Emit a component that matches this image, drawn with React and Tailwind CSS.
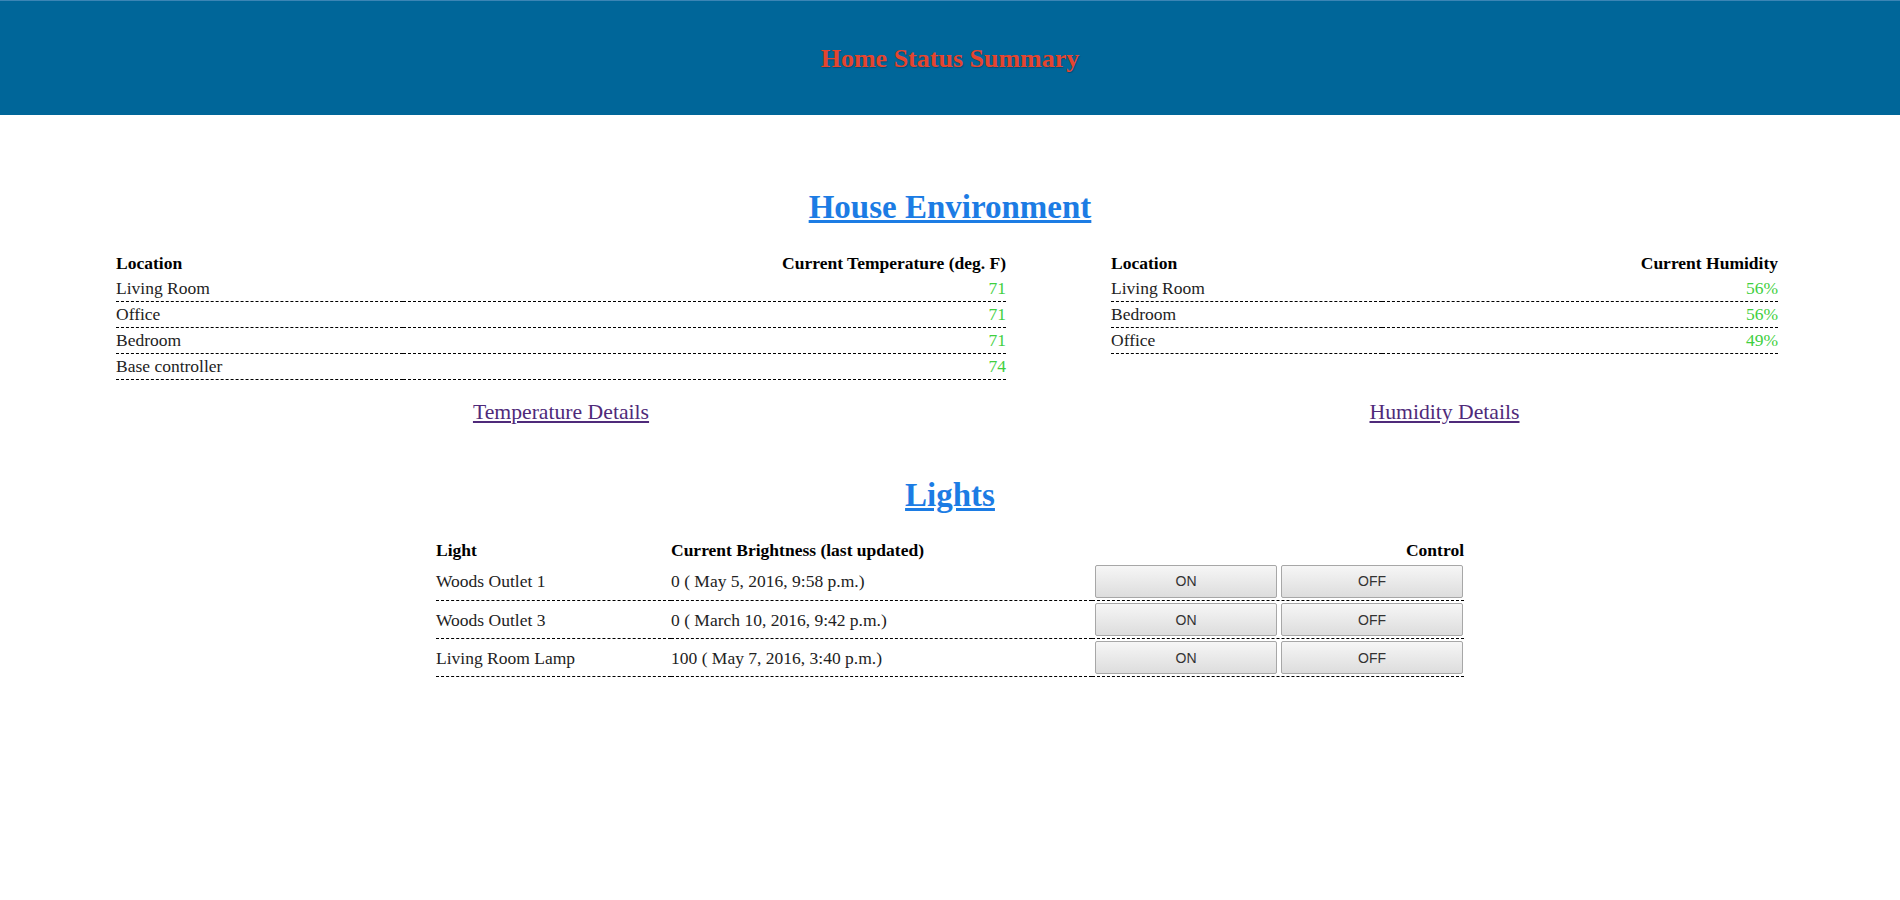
import React from 'react';

const temps = [
  { place: 'Living Room', value: '71' },
  { place: 'Office', value: '71' },
  { place: 'Bedroom', value: '71' },
  { place: 'Base controller', value: '74' },
];

const humidity = [
  { place: 'Living Room', value: '56%' },
  { place: 'Bedroom', value: '56%' },
  { place: 'Office', value: '49%' },
];

const lights = [
  { name: 'Woods Outlet 1', brightness: '0 ( May 5, 2016, 9:58 p.m.)' },
  { name: 'Woods Outlet 3', brightness: '0 ( March 10, 2016, 9:42 p.m.)' },
  { name: 'Living Room Lamp', brightness: '100 ( May 7, 2016, 3:40 p.m.)' },
];

const SensorTable = ({ label, rows }) => (
  <table className="w-full border-collapse text-[17.5px] leading-[20px]">
    <thead>
      <tr className="h-[25px]">
        <th className="text-left font-bold text-black p-0">Location</th>
        <th className="text-right font-bold text-black p-0">{label}</th>
      </tr>
    </thead>
    <tbody>
      {rows.map((row) => (
        <tr key={row.place} className="h-[26px] border-b border-dashed border-black">
          <td className="p-0 text-[#222]">{row.place}</td>
          <td className="p-0 text-right text-[#3fcf3f]">{row.value}</td>
        </tr>
      ))}
    </tbody>
  </table>
);

const Btn = ({ children }) => (
  <button className="w-[182px] h-[33px] rounded-[2px] border border-[#a7a7a7] bg-gradient-to-b from-[#f6f6f6] to-[#dddddd] font-['Liberation_Sans',Arial,sans-serif] text-[14px] text-[#333]">
    {children}
  </button>
);

const App = () => {
  return (
    <div className="min-h-screen bg-white font-['Liberation_Serif','Times_New_Roman',serif]">
      {/* Header */}
      <header className="h-[115px] bg-[#006699] border-t border-[#3b85b5] flex items-center justify-center">
        <h1 className="text-[26px] font-bold text-[#e5452f] [text-shadow:1px_1px_1px_rgba(0,0,0,0.25)]">
          Home Status Summary
        </h1>
      </header>

      {/* House Environment */}
      <section className="pt-[74px]">
        <h2 className="text-center text-[33px] leading-[37px] font-bold">
          <a href="#" className="text-[#1c7ce4] underline">House Environment</a>
        </h2>

        <div className="mt-[24px] pl-[116px] grid grid-cols-[890px_667px] gap-x-[105px]">
          <div>
            <SensorTable label="Current Temperature (deg. F)" rows={temps} />
          </div>
          <div>
            <SensorTable label="Current Humidity" rows={humidity} />
          </div>
          <div className="mt-[20px] text-center text-[21.7px] leading-[24px]">
            <a href="#" className="text-[#4f2a7a] underline">Temperature Details</a>
          </div>
          <div className="mt-[20px] text-center text-[21.7px] leading-[24px]">
            <a href="#" className="text-[#4f2a7a] underline">Humidity Details</a>
          </div>
        </div>
      </section>

      {/* Lights */}
      <section className="pt-[53px]">
        <h2 className="text-center text-[33px] leading-[37px] font-bold">
          <a href="#" className="text-[#1c7ce4] underline">Lights</a>
        </h2>

        <div className="mt-[24px] flex justify-center">
          <table className="w-[1028px] border-collapse text-[17.5px] leading-[20px]">
            <thead>
              <tr className="h-[25px]">
                <th className="w-[235px] p-0 text-left font-bold text-black">Light</th>
                <th className="p-0 text-left font-bold text-black">Current Brightness (last updated)</th>
                <th className="w-[372px] p-0 text-right font-bold text-black">Control</th>
              </tr>
            </thead>
            <tbody>
              {lights.map((light) => (
                <tr key={light.name} className="h-[38px] border-b border-dashed border-black">
                  <td className="p-0 text-[#222]">{light.name}</td>
                  <td className="p-0 text-[#222]">{light.brightness}</td>
                  <td className="p-0">
                    <div className="flex justify-end gap-[4px] pr-[1px]">
                      <Btn>ON</Btn>
                      <Btn>OFF</Btn>
                    </div>
                  </td>
                </tr>
              ))}
            </tbody>
          </table>
        </div>
      </section>
    </div>
  );
};

export default App;
